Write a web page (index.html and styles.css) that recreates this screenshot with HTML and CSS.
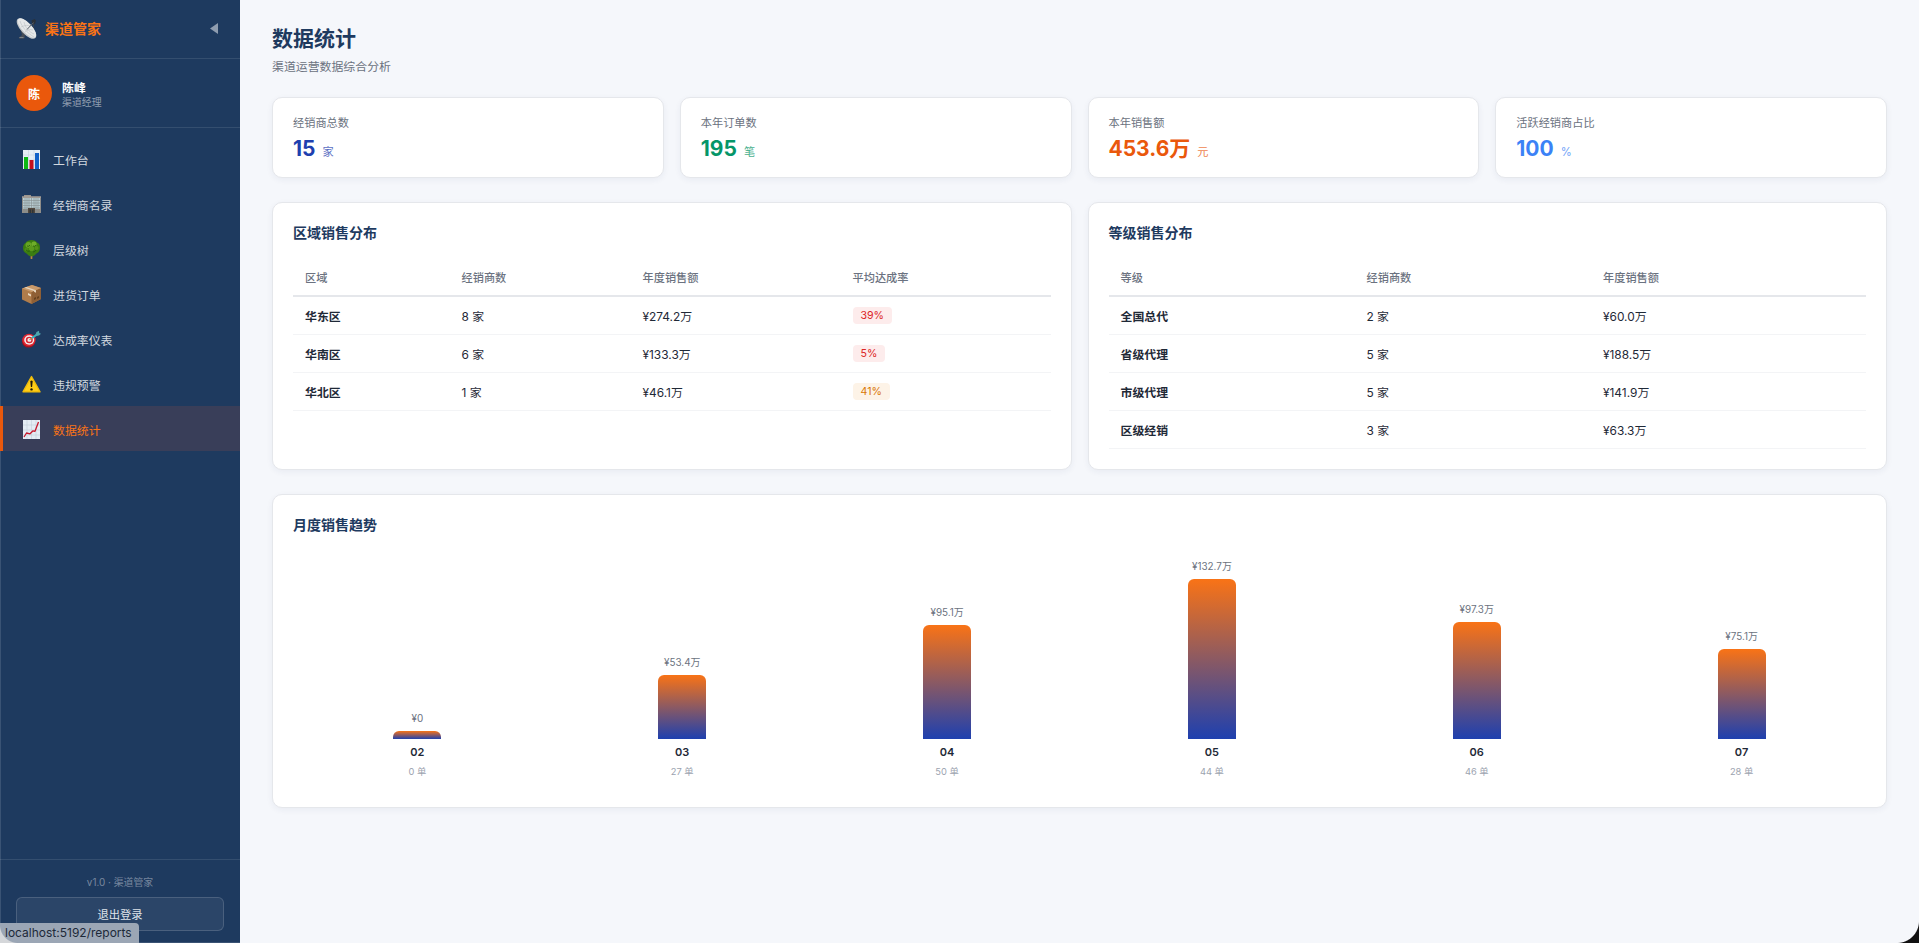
FILE: index.html
```html
<!DOCTYPE html>
<html lang="zh-CN">
<head>
    <meta charset="UTF-8">
    <meta name="viewport" content="width=device-width, initial-scale=1.0">
    <title>渠道管家</title>
    <link rel="stylesheet" href="styles.css">
</head>
<body>

    <aside class="sidebar">
        <div class="sidebar-header">
            <svg class="logo" viewBox="0 0 21 21">
                <path d="M4 10l6 6-1.500 2 .5 1.500-1.500 1.300H3.500l-.8-1.300 2-1.200L6 17z" fill="#454c56"/>
                <path d="M3.500 19.500h4" stroke="#8b939c" stroke-width=".8"/>
                <path d="M15.500 2.500l3-1.500 1.500 1.500-1 3.500-2.500 1z" fill="#2a313a"/>
                <path d="M17.500 5v7" stroke="#3b424c" stroke-width=".8"/>
                <ellipse cx="10.500" cy="10.500" rx="13" ry="5.600" transform="rotate(47 10.500 10.500)" fill="#c4c8cb"/>
                <ellipse cx="11" cy="10" rx="12.300" ry="4.900" transform="rotate(47 11 10)" fill="#e6e8e9"/>
                <path d="M4 3c2 6 7 12 14 16M8 4c1 5 5 10 10 12M5 9c4-2 7-2 10-1M9 14c2-2 5-3 8-2" fill="none" stroke="#b3b8bd" stroke-width=".5"/>
                <path d="M11 11.500l6.500-7" stroke="#59616b" stroke-width="1"/>
            </svg>
            <span class="brand">渠道管家</span>
            <button class="toggle" aria-label="收起">
                <svg width="8" height="11" viewBox="0 0 8 11"><path d="M8 0v11L0 5.500z" fill="currentColor"/></svg>
            </button>
        </div>

        <div class="user">
            <div class="avatar">陈</div>
            <div class="user-info">
                <div class="user-name">陈峰</div>
                <div class="user-role">渠道经理</div>
            </div>
        </div>

        <nav class="nav">
            <a class="nav-item">
                <svg class="nav-icon" viewBox="0 0 19 19">
                    <path d="M1 0h17v19H1z" fill="#e7eef6"/>
                    <path d="M1 5h17M1 10h17M1 15h17M6.500 0v19M12 0v19" stroke="#c3cfdd" stroke-width=".5"/>
                    <path d="M2 7h4v12H2z" fill="#0cb814"/>
                    <path d="M7.500 10h4v9h-4z" fill="#c40f1d"/>
                    <path d="M13 3h4v16h-4z" fill="#1261c9"/>
                </svg>
                <span>工作台</span>
            </a>
            <a class="nav-item">
                <svg class="nav-icon" viewBox="0 0 19 19">
                    <path d="M2 0h7v2H2z" fill="#9b958e"/>
                    <path d="M0 1.500h19V18H0z" fill="#8f8d89"/>
                    <path d="M1 3h17v11H1z" fill="#b9cdd3"/>
                    <path d="M1 5.500h17M1 8h17M1 10.500h17M1 13h17M3 3v15M5 3v15M7 3v15M9.500 3v15M12 3v15M14 3v15M16 3v15" stroke="#858d8e" stroke-width=".6"/>
                    <path d="M6 13h7v5H6z" fill="#52483f"/>
                    <path d="M7.500 14.500h1.500V18H7.500zM10 14.500h1.500V18H10z" fill="#2d3438"/>
                    <path d="M0 1.500h19v1H0z" fill="#b0a79e"/>
                </svg>
                <span>经销商名录</span>
            </a>
            <a class="nav-item">
                <svg class="nav-icon" viewBox="0 0 19 19">
                    <path d="M8.500 14h2l-.2 5H8.700z" fill="#b98a3c"/>
                    <path d="M9.500 0c3 0 4.500 1 5.500 2.500 2 .5 3 2.500 3 5 0 3-1 5-3.500 6-1.500 1.800-3 2.800-5 2.800s-3.500-1-5-2.800C2 12.500 1 10.500 1 8s1-4 2.500-5C5 .8 7 0 9.500 0z" fill="#3b7d11"/>
                    <circle cx="6.500" cy="5" r="3" fill="#67a523"/>
                    <circle cx="12" cy="4" r="2.600" fill="#6fad2a"/>
                    <circle cx="9.500" cy="8.500" r="2.700" fill="#5b991d"/>
                    <circle cx="14.500" cy="8" r="2" fill="#549118"/>
                    <circle cx="4.500" cy="9.500" r="2" fill="#4c8a17"/>
                    <path d="M4 10q2 2 4 1m3 1q2 0 3-2M5 6q2 1 3-1m3 1q2 1 3-1" fill="none" stroke="#26590b" stroke-width=".8"/>
                </svg>
                <span>层级树</span>
            </a>
            <a class="nav-item">
                <svg class="nav-icon" viewBox="0 0 19 19">
                    <path d="M0 3.500L10 0l9 3v11l-9.500 5L0 14.500z" fill="#b07c4b"/>
                    <path d="M9.500 7L19 3v11l-9.500 5z" fill="#8f5f35"/>
                    <path d="M0 3.500L10 0l9 3-9.500 4z" fill="#c99a6b"/>
                    <path d="M4.500 2l9.500 3.300v2.500l-2-1V6L2.500 2.700z" fill="#e6d3ba"/>
                    <path d="M6 8l3 1.500v2L6 10z" fill="#ead9c2"/>
                    <path d="M12 13l2-1v2l-2 1zM15 12l2-1v2l-2 1z" fill="#65401f"/>
                </svg>
                <span>进货订单</span>
            </a>
            <a class="nav-item">
                <svg class="nav-icon" viewBox="0 0 19 19">
                    <ellipse cx="6.600" cy="11.200" rx="6.600" ry="6.300" fill="#a8121c"/>
                    <ellipse cx="7" cy="10" rx="6.600" ry="6.200" fill="#df2733"/>
                    <ellipse cx="7.200" cy="10" rx="5" ry="4.700" fill="#f4eeee"/>
                    <ellipse cx="7.300" cy="10" rx="3.500" ry="3.300" fill="#d92632"/>
                    <ellipse cx="7.400" cy="9.900" rx="2" ry="1.900" fill="#f4eeee"/>
                    <path d="M7.500 9.800l3-2" stroke="#b58a4a" stroke-width="1.200"/>
                    <path d="M10 8l5-3.500" stroke="#2eb9c4" stroke-width="2"/>
                    <path d="M13.500 4.500l1-2.500L17 .8l.2 2.200 1.800.8-2 1.700-3 .5z" fill="#4fa6ae"/>
                </svg>
                <span>达成率仪表</span>
            </a>
            <a class="nav-item">
                <svg class="nav-icon" viewBox="0 0 19 19">
                    <path d="M9.500 1.500L18 16.800H1z" fill="#ffce17" stroke="#eebb0b" stroke-width="1.400" stroke-linejoin="round"/>
                    <path d="M8.300 6q1.200-1 2.400 0l-.6 6H8.900z" fill="#22190a"/>
                    <circle cx="9.500" cy="14.400" r="1.200" fill="#22190a"/>
                </svg>
                <span>违规预警</span>
            </a>
            <a class="nav-item active">
                <svg class="nav-icon" viewBox="0 0 19 19">
                    <path d="M1 0h17v19H1z" fill="#e4ecf4"/>
                    <path d="M1 5h17M1 10h17M1 15h17M5 0v19M9.500 0v19M14 0v19" stroke="#bdcad7" stroke-width=".5"/>
                    <path d="M2 17l2.500-4 3.500.8 3-3 2 .5L16.500 2" fill="none" stroke="#c8182c" stroke-width="1.300" stroke-linejoin="round"/>
                </svg>
                <span>数据统计</span>
            </a>
        </nav>

        <div class="sidebar-footer">
            <div class="version">v1.0 · 渠道管家</div>
            <button class="logout">退出登录</button>
        </div>
    </aside>

    <main class="main">
        <h1>数据统计</h1>
        <p class="subtitle">渠道运营数据综合分析</p>

        <section class="stats">
            <div class="card stat">
                <div class="stat-label">经销商总数</div>
                <div class="stat-value blue">15<span class="unit">家</span></div>
            </div>
            <div class="card stat">
                <div class="stat-label">本年订单数</div>
                <div class="stat-value green">195<span class="unit">笔</span></div>
            </div>
            <div class="card stat">
                <div class="stat-label">本年销售额</div>
                <div class="stat-value orange">453.6万<span class="unit">元</span></div>
            </div>
            <div class="card stat">
                <div class="stat-label">活跃经销商占比</div>
                <div class="stat-value light">100<span class="unit">%</span></div>
            </div>
        </section>

        <section class="tables">
            <div class="card panel">
                <h2>区域销售分布</h2>
                <table class="region-table">
                    <thead>
                        <tr><th>区域</th><th>经销商数</th><th>年度销售额</th><th>平均达成率</th></tr>
                    </thead>
                    <tbody>
                        <tr><td>华东区</td><td>8 家</td><td>¥274.2万</td><td><span class="badge danger">39%</span></td></tr>
                        <tr><td>华南区</td><td>6 家</td><td>¥133.3万</td><td><span class="badge danger">5%</span></td></tr>
                        <tr><td>华北区</td><td>1 家</td><td>¥46.1万</td><td><span class="badge warning">41%</span></td></tr>
                    </tbody>
                </table>
            </div>
            <div class="card panel">
                <h2>等级销售分布</h2>
                <table class="level-table">
                    <thead>
                        <tr><th>等级</th><th>经销商数</th><th>年度销售额</th></tr>
                    </thead>
                    <tbody>
                        <tr><td>全国总代</td><td>2 家</td><td>¥60.0万</td></tr>
                        <tr><td>省级代理</td><td>5 家</td><td>¥188.5万</td></tr>
                        <tr><td>市级代理</td><td>5 家</td><td>¥141.9万</td></tr>
                        <tr><td>区级经销</td><td>3 家</td><td>¥63.3万</td></tr>
                    </tbody>
                </table>
            </div>
        </section>

        <section class="card panel">
            <h2>月度销售趋势</h2>
            <div class="chart">
                <div class="col">
                    <div class="amount">¥0</div>
                    <div class="bar" style="height: 8px"></div>
                    <div class="month">02</div>
                    <div class="orders">0 单</div>
                </div>
                <div class="col">
                    <div class="amount">¥53.4万</div>
                    <div class="bar" style="height: 64px"></div>
                    <div class="month">03</div>
                    <div class="orders">27 单</div>
                </div>
                <div class="col">
                    <div class="amount">¥95.1万</div>
                    <div class="bar" style="height: 114px"></div>
                    <div class="month">04</div>
                    <div class="orders">50 单</div>
                </div>
                <div class="col">
                    <div class="amount">¥132.7万</div>
                    <div class="bar" style="height: 160px"></div>
                    <div class="month">05</div>
                    <div class="orders">44 单</div>
                </div>
                <div class="col">
                    <div class="amount">¥97.3万</div>
                    <div class="bar" style="height: 117px"></div>
                    <div class="month">06</div>
                    <div class="orders">46 单</div>
                </div>
                <div class="col">
                    <div class="amount">¥75.1万</div>
                    <div class="bar" style="height: 90px"></div>
                    <div class="month">07</div>
                    <div class="orders">28 单</div>
                </div>
            </div>
        </section>
    </main>

    <div class="link-status">localhost:5192/reports</div>
    <div class="corner corner-left"></div>
    <div class="corner corner-right"></div>

</body>
</html>
```

FILE: styles.css
```css
* {
    box-sizing: border-box;
    margin: 0;
    padding: 0;
}

body {
    display: flex;
    height: 100vh;
    overflow: hidden;
    font-family: Inter, "Noto Sans CJK SC", sans-serif;
    font-size: 11.9px;
    color: #1f2937;
    background: #f5f7fb;
}

button {
    font-family: inherit;
    cursor: pointer;
}

/* sidebar */
.sidebar {
    display: flex;
    flex-direction: column;
    width: 240px;
    flex-shrink: 0;
    background: #1e3a5f;
    color: #fff;
    box-shadow: inset 1px 0 0 #3a5374, inset 0 -1px 0 #3a5374;
}

.sidebar-header {
    display: flex;
    align-items: center;
    height: 59px;
    padding: 0 22px 1px 16px;
    border-bottom: 1px solid rgba(255, 255, 255, 0.1);
}

.logo {
    width: 21px;
    height: 21px;
    margin-right: 8px;
}

.brand {
    flex: 1;
    padding-bottom: 1px;
    font-size: 14px;
    font-weight: 700;
    color: #f97316;
}

.toggle {
    display: flex;
    border: none;
    background: none;
    color: #8f9db0;
}

.user {
    display: flex;
    align-items: center;
    gap: 10px;
    padding: 16px;
    border-bottom: 1px solid rgba(255, 255, 255, 0.1);
}

.avatar {
    width: 36px;
    height: 36px;
    border-radius: 50%;
    background: #ea580c;
    font-size: 12px;
    font-weight: 700;
    line-height: 40px;
    text-align: center;
}

.user-info {
    padding-top: 3px;
}

.user-name {
    font-weight: 600;
    line-height: 15px;
}

.user-role {
    font-size: 9.9px;
    line-height: 14px;
    color: rgba(255, 255, 255, 0.5);
}

.nav {
    flex: 1;
    padding: 8px 0;
}

.nav-item {
    display: flex;
    align-items: center;
    gap: 12px;
    height: 45px;
    padding: 2px 0 0 19px;
    border-left: 3px solid transparent;
    color: #d2d8df;
}

.nav-icon {
    width: 19px;
    height: 19px;
}

.nav-item.active {
    color: #f97316;
    background: #393e59;
    border-left-color: #ea580c;
}

.sidebar-footer {
    padding: 14px 16px 12px;
    border-top: 1px solid rgba(255, 255, 255, 0.1);
    text-align: center;
}

.version {
    margin-bottom: 6px;
    font-size: 9.9px;
    line-height: 17px;
    color: rgba(255, 255, 255, 0.4);
}

.logout {
    display: block;
    width: 100%;
    height: 34px;
    border: 1px solid rgba(255, 255, 255, 0.15);
    border-radius: 6px;
    background: rgba(255, 255, 255, 0.06);
    font-size: 11.3px;
    color: #dfe4ea;
}

/* content */
.main {
    flex: 1;
    min-width: 0;
    padding: 24px 32px;
}

h1 {
    font-size: 21px;
    font-weight: 700;
    line-height: 29px;
    color: #1e3a5f;
}

.subtitle {
    margin: 5px 0 22px;
    line-height: 17px;
    color: #6b7280;
}

.card {
    background: #fff;
    border: 1px solid #e5e7eb;
    border-radius: 10px;
    box-shadow: 0 2px 6px rgba(30, 58, 95, 0.06);
}

.stats {
    display: grid;
    grid-template-columns: repeat(4, 1fr);
    gap: 16px;
    margin-bottom: 24px;
}

.stat {
    height: 81px;
    padding: 17px 20px 0;
}

.stat-label {
    margin-bottom: 3px;
    font-size: 11.2px;
    line-height: 17px;
    color: #6b7280;
}

.stat-value {
    font-size: 21px;
    font-weight: 700;
    line-height: 27px;
}

.unit {
    margin-left: 7px;
    font-size: 11.2px;
    font-weight: 400;
    line-height: 1;
    opacity: 0.75;
}

.blue { color: #1e40af; }
.green { color: #059669; }
.orange { color: #ea580c; }
.light { color: #3b82f6; }

.tables {
    display: grid;
    grid-template-columns: 1fr 1fr;
    gap: 16px;
    margin-bottom: 24px;
}

.panel {
    padding: 20px;
}

h2 {
    margin-bottom: 16px;
    font-size: 14px;
    font-weight: 600;
    line-height: 20px;
    color: #1e3a5f;
}

table {
    width: 100%;
    table-layout: fixed;
    border-spacing: 0;
}

th {
    height: 38px;
    padding: 0 12px;
    border-bottom: 2px solid #e5e7eb;
    font-size: 11.2px;
    font-weight: 500;
    text-align: left;
    color: #6b7280;
}

td {
    height: 38px;
    padding: 0 12px;
    border-bottom: 1px solid #f3f4f6;
    font-size: 11.9px;
}

td:first-child {
    font-weight: 600;
}

.region-table th:nth-child(1) { width: 156.5px; }
.region-table th:nth-child(2) { width: 181px; }
.region-table th:nth-child(3) { width: 210px; }
.level-table th:nth-child(1) { width: 246px; }
.level-table th:nth-child(2) { width: 236.5px; }

.badge {
    display: inline-block;
    padding: 0 8px;
    border-radius: 4px;
    font-size: 10.6px;
    font-weight: 400;
    line-height: 17px;
}

.danger {
    color: #dc2626;
    background: #fdecec;
}

.warning {
    color: #d97706;
    background: #fdf3e7;
}

/* bar chart */
.chart {
    display: flex;
    align-items: flex-end;
    gap: 16px;
    height: 236px;
    padding-bottom: 8px;
}

.col {
    flex: 1;
    display: flex;
    flex-direction: column;
    align-items: center;
}

.amount {
    margin-bottom: 6px;
    font-size: 9.9px;
    line-height: 14px;
    color: #6b7280;
}

.bar {
    width: 48px;
    border-radius: 6px 6px 0 0;
    background: linear-gradient(to bottom, #f97316, #1e40af);
}

.month {
    margin-top: 5px;
    font-size: 11px;
    font-weight: 600;
    line-height: 16px;
}

.orders {
    margin-top: 5px;
    font-size: 9.3px;
    line-height: 14px;
    color: #9ca3af;
}

/* link preview bubble and rounded window corners */
.link-status {
    position: fixed;
    left: 0;
    bottom: 0;
    width: 139px;
    height: 20px;
    padding-left: 5px;
    border-radius: 0 4px 0 0;
    background: #9ba6b5;
    font-size: 12px;
    line-height: 19px;
    color: #1d2939;
}

.corner {
    position: fixed;
    bottom: 0;
    width: 18px;
    height: 18px;
}

.corner-left {
    left: 0;
    background: radial-gradient(circle at 100% 0, transparent 17.5px, #d5d7da 18.5px);
}

.corner-right {
    right: 0;
    width: 22px;
    height: 22px;
    background: radial-gradient(circle at 0 0, transparent 21.5px, #111 22.5px);
}
```
